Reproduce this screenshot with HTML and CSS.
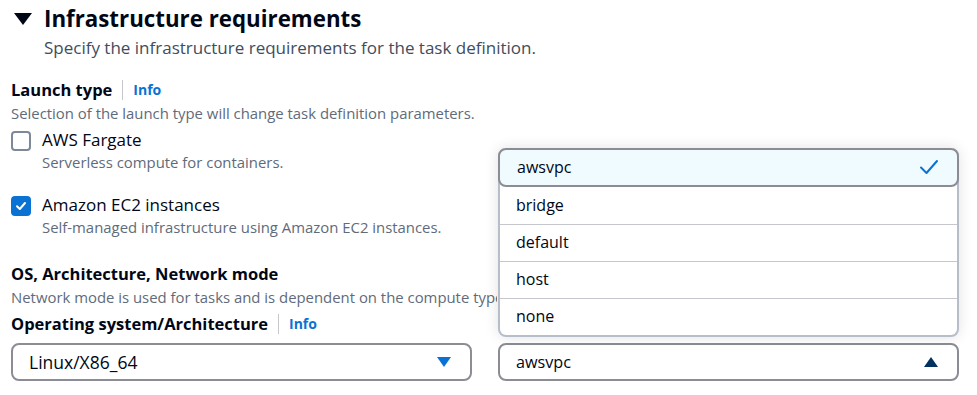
FILE: index.html
```html
<!DOCTYPE html>
<html lang="en">
<head>
    <meta charset="UTF-8">
    <title>Infrastructure requirements</title>
    <link rel="stylesheet" href="styles.css">
</head>
<body>
    <div class="panel">
        <div class="panel-header">
            <span class="caret-down"></span>
            <h2 class="panel-title">Infrastructure requirements</h2>
        </div>
        <p class="panel-subtitle">Specify the infrastructure requirements for the task definition.</p>

        <div class="field launch-field">
            <div class="label-row">
                <span class="field-label">Launch type</span>
                <span class="info-link">Info</span>
            </div>
            <p class="field-desc">Selection of the launch type will change task definition parameters.</p>

            <div class="check-item">
                <span class="checkbox"></span>
                <div>
                    <div class="check-label">AWS Fargate</div>
                    <div class="field-desc">Serverless compute for containers.</div>
                </div>
            </div>

            <div class="check-item ec2">
                <span class="checkbox checked">
                    <svg viewBox="0 0 14 14" width="14" height="14"><path d="M3 7.2l2.8 2.8 5.2-6" fill="none" stroke="#fff" stroke-width="2" stroke-linecap="round" stroke-linejoin="round"/></svg>
                </span>
                <div>
                    <div class="check-label">Amazon EC2 instances</div>
                    <div class="field-desc">Self-managed infrastructure using Amazon EC2 instances.</div>
                </div>
            </div>
        </div>

        <div class="field os-field">
            <div class="field-label">OS, Architecture, Network mode</div>
            <p class="field-desc clipped">Network mode is used for tasks and is dependent on the compute type selected.</p>
            <div class="label-row">
                <span class="field-label">Operating system/Architecture</span>
                <span class="info-link">Info</span>
            </div>

            <div class="select-grid">
                <div class="select">
                    <span class="select-value wide">Linux/X86_64</span>
                    <span class="select-caret"></span>
                </div>

                <div class="select-wrap">
                    <div class="select open">
                        <span class="select-value">awsvpc</span>
                        <span class="select-caret up"></span>
                    </div>
                    <ul class="dropdown">
                        <li class="option selected">
                            <span>awsvpc</span>
                            <svg viewBox="0 0 20 16" width="20" height="16"><path d="M2 8.5l5.5 5.5 10.5-12" fill="none" stroke="#0972d3" stroke-width="2" stroke-linecap="round" stroke-linejoin="round"/></svg>
                        </li>
                        <li class="option">bridge</li>
                        <li class="option">default</li>
                        <li class="option">host</li>
                        <li class="option">none</li>
                    </ul>
                </div>
            </div>
        </div>
    </div>
</body>
</html>
```

FILE: styles.css
```css
* {
    margin: 0;
    padding: 0;
    box-sizing: border-box;
}

body {
    font-family: "Open Sans", "Noto Sans", sans-serif;
    background: #fff;
    color: #000716;
    font-size: 16px;
    line-height: 22px;
}

.panel {
    padding: 4px 18px 0 11px;
}

.panel-header {
    display: flex;
    align-items: center;
    height: 30px;
}

.caret-down {
    width: 0;
    height: 0;
    border-left: 9px solid transparent;
    border-right: 9px solid transparent;
    border-top: 12px solid #000716;
    margin: 0 12px 0 3px;
}

.panel-title {
    font-size: 22.3px;
    line-height: 30px;
    font-weight: 700;
}

.panel-subtitle {
    margin: 3px 0 0 33px;
    color: #414d5c;
    font-size: 17px;
}

.launch-field {
    margin-top: 20px;
}

.label-row {
    display: flex;
    align-items: center;
}

.field-label {
    font-weight: 700;
    font-size: 16.5px;
}

.info-link {
    color: #0972d3;
    font-weight: 700;
    font-size: 14px;
    border-left: 1px solid #c6c6cd;
    margin-left: 10px;
    padding-left: 10px;
    line-height: 20px;
}

.field-desc {
    color: #5f6b7a;
    font-size: 14.9px;
    line-height: 20px;
    margin-top: 2px;
    white-space: nowrap;
}

.check-item {
    display: flex;
    gap: 11px;
    margin-top: 6px;
}

.check-item.ec2 {
    margin-top: 22px;
}

.check-item .field-desc {
    margin-top: 1px;
}

.check-label {
    font-size: 17px;
}

.checkbox {
    flex: none;
    width: 20px;
    height: 20px;
    margin-top: 2px;
    border: 2px solid #7d8998;
    border-radius: 4px;
    display: flex;
    align-items: center;
    justify-content: center;
}

.checkbox.checked {
    background: #0972d3;
    border-color: #0972d3;
}

.os-field {
    margin-top: 26px;
}

.os-field .field-desc {
    margin-bottom: 6px;
}

.field-desc.clipped {
    overflow: hidden;
    width: 486px;
}

.select-grid {
    display: grid;
    grid-template-columns: 1fr 1fr;
    gap: 26px;
    margin-top: 8px;
}

.select {
    height: 38px;
    border: 2px solid #8c8c94;
    border-radius: 8px;
    display: flex;
    align-items: center;
    justify-content: space-between;
    padding: 0 19px 0 16px;
    background: #fff;
}

.select-value {
    font-size: 16.2px;
}

.select-value.wide {
    font-size: 17.5px;
}

.select-caret {
    width: 0;
    height: 0;
    border-left: 7px solid transparent;
    border-right: 7px solid transparent;
    border-top: 10px solid #0972d3;
}

.select-caret.up {
    border-top: none;
    border-bottom: 10px solid #033160;
}

.select-wrap {
    position: relative;
}

.dropdown {
    position: absolute;
    left: 0;
    right: 0;
    bottom: 44px;
    list-style: none;
    background: #fff;
    border: 2px solid #b6bec9;
    border-top: none;
    border-radius: 8px;
    box-shadow: 0 0 14px rgba(0, 7, 22, 0.12);
}

.option {
    height: 37px;
    display: flex;
    align-items: center;
    justify-content: space-between;
    padding: 0 16px 2px;
    border-top: 1px solid #c6c6cd;
}

.option.selected {
    height: 39px;
    margin: 0 -2px;
    padding: 0 18px 2px 17px;
    background: #f0fbff;
    border: 2px solid #8c8c94;
    border-radius: 8px;
}

.option.selected + .option {
    border-top: none;
}
```
